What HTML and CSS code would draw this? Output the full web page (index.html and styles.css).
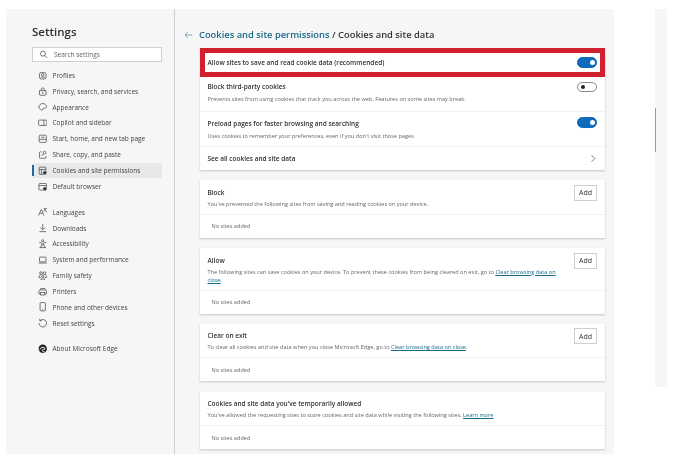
FILE: index.html
```html
<!DOCTYPE html>
<html lang="en">
<head>
<meta charset="utf-8">
<title>Settings</title>
<link rel="stylesheet" href="styles.css">
</head>
<body>
<div class="desk">
  <div class="window">
    <aside class="side">
      <h1 class="side-title">Settings</h1>
      <div class="search">
        <svg class="ico-s" viewBox="0 0 16 16"><circle cx="7" cy="6.500" r="4.500"/><path d="M10.300 9.800l4 4"/></svg>
        <span>Search settings</span>
      </div>
      <nav class="nav">
        <a class="item"><svg class="ico" viewBox="0 0 16 16"><path d="M2.500 5.500a3 3 0 0 1 3-3h5a3 3 0 0 1 3 3v5a3 3 0 0 1-3 3h-5a3 3 0 0 1-3-3z"/><circle cx="8" cy="6.500" r="2.200"/><path d="M4 12c1-2.500 7-2.500 8 0"/></svg>Profiles</a>
        <a class="item"><svg class="ico" viewBox="0 0 16 16"><path d="M2.500 6h11v6a2 2 0 0 1-2 2h-7a2 2 0 0 1-2-2z"/><path d="M5.500 6V4a2.500 2.500 0 0 1 5 0v2"/><circle cx="8" cy="10" r=".8"/></svg>Privacy, search, and services</a>
        <a class="item"><svg class="ico" viewBox="0 0 16 16"><path d="M1.500 8.500C1.500 5 5 2.500 8 2.500s6.500 2.500 6.500 5.500-3 2-5 2.500S9 14 7 13.500 1.500 11.500 1.500 8.500z"/></svg>Appearance</a>
        <a class="item"><svg class="ico" viewBox="0 0 16 16"><rect x="1" y="3.500" width="14" height="9" rx="1.500"/><path d="M10 3.500v9"/></svg>Copilot and sidebar</a>
        <a class="item"><svg class="ico" viewBox="0 0 16 16"><rect x="2" y="2" width="12" height="12" rx="1.500"/><path d="M2 9h12M5 5.500h6"/></svg>Start, home, and new tab page</a>
        <a class="item"><svg class="ico" viewBox="0 0 16 16"><path d="M6 3H4a1.500 1.500 0 0 0-1.500 1.500v8A1.500 1.500 0 0 0 4 14h8a1.500 1.500 0 0 0 1.500-1.500V10"/><circle cx="11" cy="4.500" r="2.300"/><path d="M6 10c.5-2 2-3 3.500-3.500"/></svg>Share, copy, and paste</a>
        <a class="item active"><svg class="ico" viewBox="0 0 16 16"><rect x="2" y="2" width="11" height="12" rx="1"/><path d="M2 6h11M6 6v8"/><circle class="fill" cx="11.500" cy="11.500" r="3.300"/></svg>Cookies and site permissions</a>
        <a class="item"><svg class="ico" viewBox="0 0 16 16"><rect x="1.500" y="2.500" width="13" height="11" rx="1.500"/><path d="M1.500 6h13"/><circle class="fill" cx="11.500" cy="11.500" r="3.300"/></svg>Default browser</a>
      </nav>
      <nav class="nav nav-gap">
        <a class="item"><svg class="ico" viewBox="0 0 16 16"><path d="M1 14.500L5.500 4l4.500 10.500M3 10.500h5M9.500 3h5.500M12 1.500V3c0 2-1 3.500-2.500 4.500M11 5c.5 1.500 2 2.500 4 3"/></svg>Languages</a>
        <a class="item"><svg class="ico" viewBox="0 0 16 16"><path d="M8 1.500V11M4 7.500L8 11.500l4-4M2.500 14.500h11"/></svg>Downloads</a>
        <a class="item"><svg class="ico" viewBox="0 0 16 16"><circle cx="8" cy="3" r="1.800"/><path d="M2 5.500l4.500 1.300v3L4 14.500M14 5.500l-4.500 1.300v3l2.500 4.700M2.500 14.500h11M6.500 10h3"/></svg>Accessibility</a>
        <a class="item"><svg class="ico" viewBox="0 0 16 16"><rect x="2.500" y="3.500" width="11" height="8" rx="1"/><path d="M1 13.500h14"/></svg>System and performance</a>
        <a class="item"><svg class="ico" viewBox="0 0 16 16"><circle cx="5" cy="3.500" r="2.200"/><circle cx="11" cy="3.500" r="2.200"/><circle cx="8" cy="8.500" r="1.800"/><path d="M1.500 11c0-3 1-5 3.500-5M14.500 11c0-3-1-5-3.500-5M1.500 11h3M11.500 11h3M5 15c0-2.500 1-4 3-4s3 1.500 3 4z"/></svg>Family safety</a>
        <a class="item"><svg class="ico" viewBox="0 0 16 16"><path d="M4.500 5V2.500h7V5M4.500 11.500h-3V7A2 2 0 0 1 3.500 5h9a2 2 0 0 1 2 2v4.500h-3"/><rect x="4.500" y="9" width="7" height="4.500"/></svg>Printers</a>
        <a class="item"><svg class="ico" viewBox="0 0 16 16"><rect x="3.500" y="1" width="9" height="14" rx="1.500"/><path d="M7 13h2"/></svg>Phone and other devices</a>
        <a class="item"><svg class="ico" viewBox="0 0 16 16"><path d="M3.500 4.500A6.300 6.300 0 1 1 1.800 8.500M3 1.200v3.500h3.500"/></svg>Reset settings</a>
      </nav>
      <nav class="nav nav-gap">
        <a class="item"><svg class="ico" viewBox="0 0 16 16"><circle class="dark" cx="8" cy="8" r="7"/><path class="cut" d="M3 9.500c1-3.500 5.500-5 8-3 1 1 .8 2.500-.8 2.500-2 0-3 .5-2.700 2.500.2 1.500 2 2 3.500 1.500"/></svg>About Microsoft Edge</a>
      </nav>
    </aside>
    <main class="main">
      <header class="crumb">
        <svg class="back" viewBox="0 0 12 10"><path d="M11 5H1.500M5 1.200L1.200 5 5 8.800"/></svg>
        <h2 class="crumb-text"><a class="crumb-link">Cookies and site permissions</a> / Cookies and site data</h2>
      </header>
      <section class="card card-top">
        <div class="row row-hi">
          <span class="label">Allow sites to save and read cookie data (recommended)</span>
          <span class="toggle on"></span>
        </div>
        <div class="row row-block">
          <div class="stack">
            <span class="label">Block third-party cookies</span>
            <span class="desc">Prevents sites from using cookies that track you across the web. Features on some sites may break.</span>
          </div>
          <span class="toggle"></span>
        </div>
        <div class="row row-preload">
          <div class="stack">
            <span class="label">Preload pages for faster browsing and searching</span>
            <span class="desc">Uses cookies to remember your preferences, even if you don't visit those pages</span>
          </div>
          <span class="toggle on toggle-up"></span>
        </div>
        <div class="row row-link">
          <span class="label">See all cookies and site data</span>
          <svg class="chev" viewBox="0 0 8 12"><path d="M2 1.500L6.500 6 2 10.500"/></svg>
        </div>
      </section>
      <section class="card">
        <div class="head">
          <div class="stack">
            <span class="label">Block</span>
            <span class="desc desc-head">You've prevented the following sites from saving and reading cookies on your device.</span>
          </div>
          <button class="add">Add</button>
        </div>
        <div class="empty">No sites added</div>
      </section>
      <section class="card">
        <div class="head">
          <div class="stack">
            <span class="label">Allow</span>
            <span class="desc desc-head desc-wrap">The following sites can save cookies on your device. To prevent these cookies from being cleared on exit, go to <a class="link">Clear browsing data on</a> <a class="link">close</a>.</span>
          </div>
          <button class="add">Add</button>
        </div>
        <div class="empty">No sites added</div>
      </section>
      <section class="card">
        <div class="head">
          <div class="stack">
            <span class="label">Clear on exit</span>
            <span class="desc desc-head">To clear all cookies and site data when you close Microsoft Edge, go to <a class="link">Clear browsing data on close</a>.</span>
          </div>
          <button class="add">Add</button>
        </div>
        <div class="empty">No sites added</div>
      </section>
      <section class="card">
        <div class="head">
          <div class="stack">
            <span class="label">Cookies and site data you've temporarily allowed</span>
            <span class="desc desc-head">You've allowed the requesting sites to store cookies and site data while visiting the following sites. <a class="link">Learn more</a></span>
          </div>
        </div>
        <div class="empty">No sites added</div>
      </section>
    </main>
    <div class="strip"><span class="strip-mark"></span></div>
  </div>
</div>
</body>
</html>
```

FILE: styles.css
```css
* { box-sizing: border-box; }
html, body { margin: 0; height: 100%; background: #fff; overflow: hidden; }
body { font-family: "Open Sans", "Noto Sans", sans-serif; color: #444; }
.desk { height: 460px; padding: 9px 0 0 6px; filter: blur(.3px); }
.window { display: flex; height: 445px; align-items: flex-start; }
.side { width: 169px; height: 445px; flex: none; background: #f6f6f6; border-right: 1px solid #cfcfcf; padding: 14px 0 0 26px; }
.side-title { margin: 0; font-size: 11.500px; line-height: 17px; font-weight: 600; color: #2e2e2e; }
.search { width: 130px; height: 15.500px; margin-top: 6.500px; background: #fff; border: 1px solid #d0d0d0; display: flex; align-items: center; gap: 6px; padding-left: 6px; font-size: 6.500px; color: #666; }
.ico-s { width: 9px; height: 9px; fill: none; stroke: #444; stroke-width: 1.300; flex: none; }
.nav { display: flex; flex-direction: column; width: 130px; }
.nav:first-of-type { margin-top: 5.500px; }
.nav-gap { margin-top: 10px; }
.item { position: relative; height: 15.850px; display: flex; align-items: center; gap: 5.500px; padding-left: 5.500px; font-size: 6.500px; color: #444; white-space: nowrap; }
.active { background: #e8e8e8; }
.active::before { content: ""; position: absolute; left: 0; top: 2px; width: 2px; height: 11px; background: #1e6aa8; }
.ico { width: 9.500px; height: 9.500px; flex: none; fill: none; stroke: #444; stroke-width: 1.200; }
.ico .fill { fill: #333; stroke: #f0f0f0; stroke-width: .8; }
.ico .dark { fill: #222; stroke: none; }
.ico .cut { stroke: #fff; stroke-width: 1.600; }
.main { width: 439px; height: 445px; flex: none; background: #f6f6f6; padding: 17px 0 0 9px; }
.crumb { display: flex; align-items: center; height: 17px; gap: 6px; }
.back { width: 9px; height: 8px; flex: none; fill: none; stroke: #6f93a8; stroke-width: 1.100; }
.crumb-text { margin: 0; font-size: 9.350px; line-height: 17px; font-weight: 600; color: #333; white-space: nowrap; }
.crumb-link { color: #1a6a8a; }
.card { width: 405.500px; margin: 10.300px 0 0 15.500px; background: #fff; box-shadow: 0 1px 2px rgba(0,0,0,.2); }
.card-top { margin-top: 5px; }
.row { display: flex; justify-content: space-between; padding: 0 8px; }
.row-hi { height: 28.500px; align-items: center; border: 5px solid #d01f2d; padding: 0 3px; }
.row-block { height: 34px; padding-top: 5px; }
.row-preload { height: 35px; padding-top: 7px; border-top: 1px solid #f1f1f1; }
.row-link { height: 24.500px; align-items: center; border-top: 1px solid #f1f1f1; }
.stack { display: flex; flex-direction: column; }
.label { font-size: 6.500px; line-height: 9px; font-weight: 600; color: #333; white-space: nowrap; }
.desc { font-size: 5.600px; line-height: 8px; color: #666; margin-top: 4.500px; white-space: nowrap; }
.desc-head { margin-top: 3px; }
.desc-wrap { white-space: normal; width: 356px; }
.toggle { width: 20px; height: 10.500px; border-radius: 5.250px; border: 1px solid #888; position: relative; flex: none; }
.toggle::after { content: ""; position: absolute; left: 3px; top: 2.250px; width: 4px; height: 4px; border-radius: 50%; background: #222; }
.toggle.on { background: #0f6cbd; border-color: #0f6cbd; }
.toggle.on::after { left: 12px; top: 1.750px; width: 5px; height: 5px; background: #fff; }
.toggle-up { margin-top: -1.500px; }
.chev { width: 6px; height: 9px; fill: none; stroke: #555; stroke-width: 1; margin-right: 1.500px; }
.head { display: flex; justify-content: space-between; padding: 7.500px 8px 6px; }
.add { width: 23px; height: 16px; padding: 0; margin-top: -3px; font: 7px "Open Sans", sans-serif; color: #333; background: #fff; border: 1px solid #cfcfcf; flex: none; }
.link { color: #1a6a8a; text-decoration: underline; }
.empty { height: 24px; display: flex; align-items: center; padding-left: 12px; border-top: 1px solid #f1f1f1; font-size: 5.600px; color: #666; }
.strip { width: 12px; height: 378px; flex: none; margin-left: 41px; background: #f6f6f6; position: relative; }
.strip-mark { position: absolute; left: 0; top: 99px; width: 1px; height: 44px; background: #de7f7f; }
```
